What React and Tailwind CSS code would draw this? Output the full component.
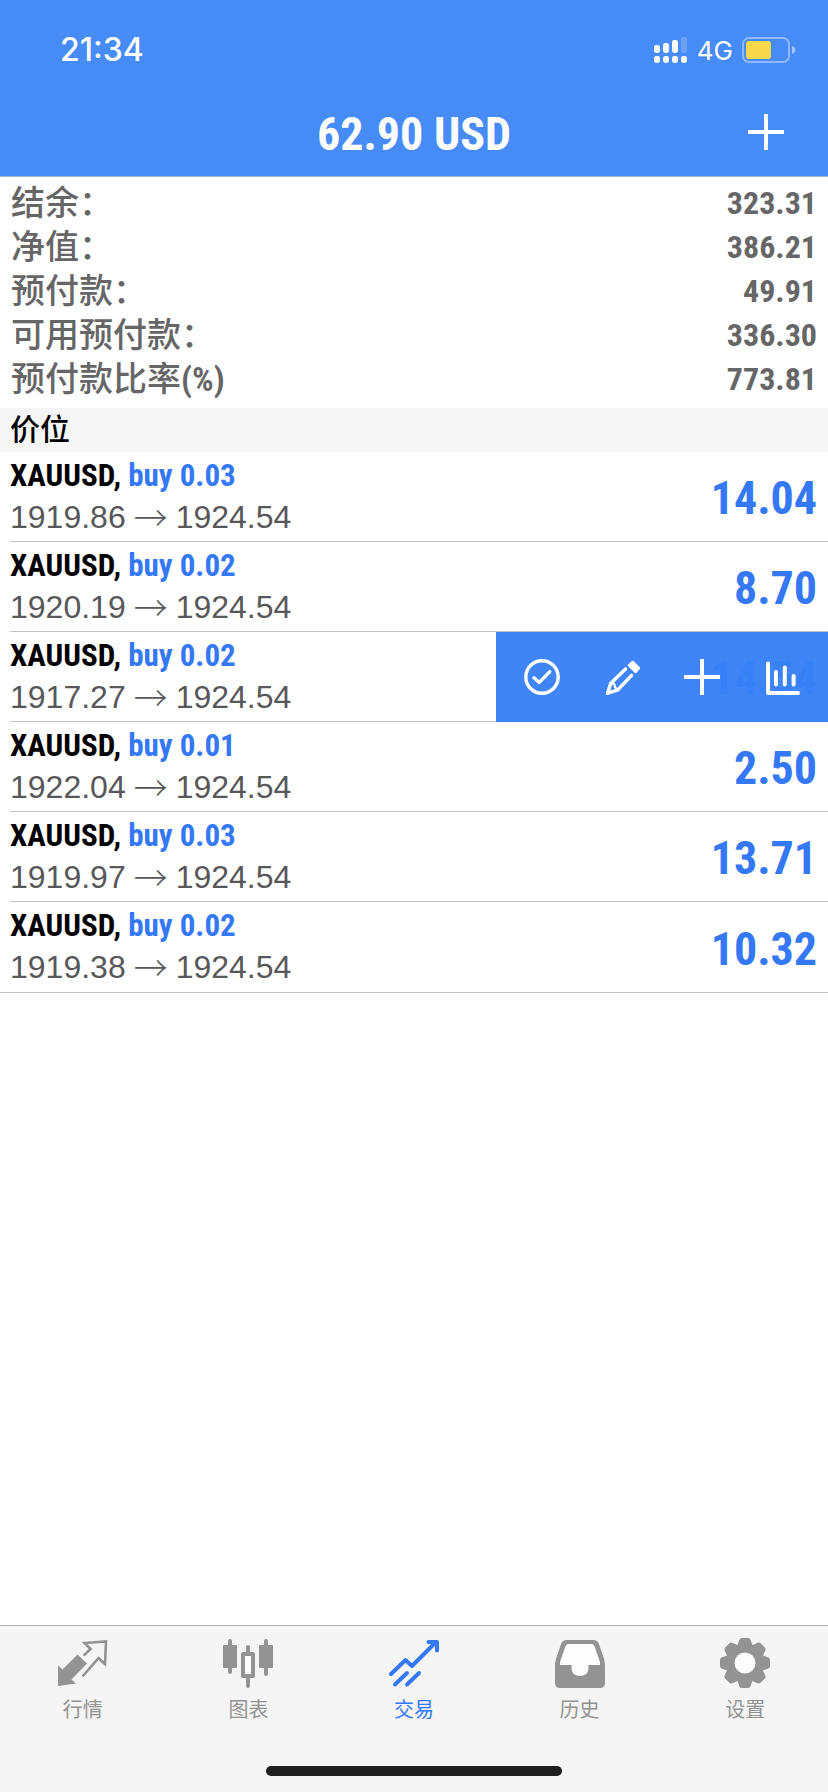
import React, { useState } from 'react';
import clsx from 'clsx';

const summary = [
  { label: '结余：', value: '323.31' },
  { label: '净值：', value: '386.21' },
  { label: '预付款：', value: '49.91' },
  { label: '可用预付款：', value: '336.30' },
  { label: '预付款比率', unit: '(%)', value: '773.81' },
];

const positions = [
  { id: 1, symbol: 'XAUUSD', side: 'buy', volume: '0.03', open: '1919.86', current: '1924.54', profit: '14.04' },
  { id: 2, symbol: 'XAUUSD', side: 'buy', volume: '0.02', open: '1920.19', current: '1924.54', profit: '8.70' },
  { id: 3, symbol: 'XAUUSD', side: 'buy', volume: '0.02', open: '1917.27', current: '1924.54', profit: '14.54' },
  { id: 4, symbol: 'XAUUSD', side: 'buy', volume: '0.01', open: '1922.04', current: '1924.54', profit: '2.50' },
  { id: 5, symbol: 'XAUUSD', side: 'buy', volume: '0.03', open: '1919.97', current: '1924.54', profit: '13.71' },
  { id: 6, symbol: 'XAUUSD', side: 'buy', volume: '0.02', open: '1919.38', current: '1924.54', profit: '10.32' },
];

const PlusIcon = () => (
  <svg width="36" height="36" viewBox="0 0 36 36" stroke="currentColor" strokeWidth="4" aria-hidden="true">
    <path d="M18 0v36M0 18h36" />
  </svg>
);

const CheckIcon = () => (
  <svg width="36" height="36" viewBox="0 0 36 36" fill="none" stroke="currentColor" strokeWidth="3.4" aria-hidden="true">
    <circle cx="18" cy="18" r="16.2" />
    <path d="M10 18.8l5.2 4.6 10.6-10.6" strokeLinecap="round" strokeLinejoin="round" />
  </svg>
);

const PencilIcon = () => (
  <svg width="36" height="36" viewBox="0 0 36 36" fill="none" stroke="currentColor" aria-hidden="true">
    <path d="M21.6 10L6.6 24.4 3.6 34.2 13.4 31.2 27.6 16.4" strokeWidth="3.4" strokeLinejoin="round" strokeLinecap="round" />
    <path d="M7 24.5l3.4.8.6 3 2.6 2.4" strokeWidth="2.2" strokeLinejoin="round" />
    <path d="M2.5 35.5l1.5-5.5 4 4z" fill="currentColor" strokeWidth="1" strokeLinejoin="round" />
    <path d="M28.6 3L34.8 9.2 31.6 12.8 25 6.4z" fill="currentColor" strokeWidth="2.6" strokeLinejoin="round" />
  </svg>
);

const BarsIcon = () => (
  <svg width="36" height="36" viewBox="0 0 36 36" fill="none" stroke="currentColor" strokeWidth="4" strokeLinecap="round" strokeLinejoin="round" aria-hidden="true">
    <path d="M4 4.5v29.5h30" />
    <path d="M12 13v12.5M20.8 8.5v17M29.6 17v8.5" />
  </svg>
);

const SignalIcon = () => (
  <svg width="34" height="28" viewBox="0 0 34 28" fill="currentColor" aria-hidden="true">
    <rect x="0" y="9" width="6" height="8" rx="2.4" />
    <rect x="9" y="7" width="6" height="10" rx="2.4" />
    <rect x="18" y="4" width="6" height="13" rx="2.4" />
    <rect x="27" y="1" width="6" height="16" rx="2" opacity=".2" />
    <rect x="0" y="20" width="6" height="7" rx="2.4" />
    <rect x="9" y="20" width="6" height="7" rx="2.4" />
    <rect x="18" y="20" width="6" height="7" rx="2.4" />
    <rect x="27" y="20" width="6" height="7" rx="2.4" />
  </svg>
);

const BatteryIcon = () => (
  <svg width="54" height="26" viewBox="0 0 54 26" aria-hidden="true">
    <rect x="1" y="1" width="46" height="24" rx="6" fill="none" stroke="#fff" strokeOpacity=".4" strokeWidth="2" />
    <rect x="4" y="4" width="25" height="18" rx="3" fill="#f7d84b" />
    <path d="M50 9c2.4.8 3.4 2.2 3.4 4s-1 3.2-3.4 4z" fill="#fff" fillOpacity=".5" />
  </svg>
);

const QuotesIcon = () => (
  <svg width="50" height="50" viewBox="0 0 50 50" aria-hidden="true">
    <path d="M0 27.5L4.5 31.5 19.5 16.5 29 25.5 13.5 41.5 18 45.5 0 48z" fill="currentColor" />
    <path d="M25.6 17.6l7-6.6-6-6L48 3.5 47 26l-6.5-5.8L24.5 38.5" fill="none" stroke="currentColor" strokeWidth="2.6" />
  </svg>
);

const ChartIcon = () => (
  <svg width="50" height="50" viewBox="0 0 50 50" fill="none" stroke="currentColor" strokeWidth="4" strokeLinecap="round" aria-hidden="true">
    <path d="M7 3v31M43 3v33M25 9v6M25 40v8" />
    <rect x="1" y="8" width="12" height="21" fill="currentColor" strokeWidth="2" strokeLinejoin="round" />
    <rect x="37" y="8" width="12" height="21" fill="currentColor" strokeWidth="2" strokeLinejoin="round" />
    <rect x="20" y="16" width="10" height="22" className="fill-[#fdfdfd]" strokeLinejoin="round" />
  </svg>
);

const TradeIcon = () => (
  <svg width="50" height="50" viewBox="0 0 50 50" fill="none" stroke="currentColor" strokeWidth="4" strokeLinecap="round" strokeLinejoin="round" aria-hidden="true">
    <path d="M2 36L16.5 22 23 28 47 4" />
    <path d="M39.5 4H48V12.5" />
    <path d="M6 46.5L18 35M18 46.5l12-11.5" />
  </svg>
);

const HistoryIcon = () => (
  <svg width="50" height="50" viewBox="0 0 50 50" aria-hidden="true">
    <path
      d="M12 2h26c3 0 5 1.5 6 4l5 15c.6 2 1 4 1 6v18c0 3-2 5-5 5H5c-3 0-5-2-5-5V27c0-2 .4-4 1-6L6 6c1-2.5 3-4 6-4z"
      fill="currentColor"
    />
    <path d="M14 6h22c2 0 3 .8 3.6 2.6L45 24v3H33.5v3c0 5-3.5 8-8.5 8s-8.5-3-8.5-8v-3H5v-3L10.4 8.6C11 6.8 12 6 14 6z" className="fill-[#fdfdfd]" />
  </svg>
);

const SettingsIcon = () => (
  <svg width="50" height="50" viewBox="0 0 50 50" aria-hidden="true">
    <g fill="currentColor">
      <circle cx="25" cy="25" r="19" />
      {[0, 45, 90, 135, 180, 225, 270, 315].map((angle) => (
        <path key={angle} d="M15.5 9C19.5 7 18 0 22 0h6C32 0 30.5 7 34.5 9z" transform={`rotate(${angle} 25 25)`} />
      ))}
    </g>
    <circle cx="25" cy="25" r="10.5" className="fill-[#fdfdfd]" />
  </svg>
);

const tabs = [
  { id: 'quotes', label: '行情', icon: QuotesIcon },
  { id: 'chart', label: '图表', icon: ChartIcon },
  { id: 'trade', label: '交易', icon: TradeIcon },
  { id: 'history', label: '历史', icon: HistoryIcon },
  { id: 'settings', label: '设置', icon: SettingsIcon },
];

const rowActions = [
  { label: '平仓', icon: CheckIcon },
  { label: '修改', icon: PencilIcon },
  { label: '新订单', icon: PlusIcon },
  { label: '图表', icon: BarsIcon },
];

const StatusBar = () => (
  <div className="flex h-[100px] items-center justify-between pl-[60px] pr-8 font-['Inter',sans-serif]">
    <span className="text-[32px] font-medium">21:34</span>
    <div className="flex items-center gap-[9px]">
      <SignalIcon />
      <span className="text-[26px]">4G</span>
      <BatteryIcon />
    </div>
  </div>
);

const PositionRow = ({ position, open }) => (
  <li className="relative pl-[10px] last:border-b last:border-[#c4c4c6]">
    <div className={clsx('flex h-[90px] items-center justify-between pr-[11px]', position.id < positions.length && 'border-b border-[#c4c4c6]')}>
      <div>
        <p className="text-[31px] leading-[40px] font-bold text-black">
          {position.symbol}, <span className="text-[#3478f6]">{position.side} {position.volume}</span>
        </p>
        <p className="flex items-center gap-2 font-['Liberation_Sans',sans-serif] text-[32px] leading-[42px] text-[#58585a]">
          <span>{position.open}</span>
          <span className="font-['Noto_Sans_CJK_SC',sans-serif] text-[34px] font-light">→</span>
          <span>{position.current}</span>
        </p>
      </div>
      <span className="pt-1 text-[46px] font-bold text-[#3478f6]">{position.profit}</span>
    </div>
    {/* Swipe actions cover the right part of the row */}
    {open && (
      <div className="absolute inset-y-0 right-0 flex w-[332px] items-center bg-[#3780f6]/96 px-[6px] text-white">
        {rowActions.map(({ label, icon: Icon }) => (
          <button key={label} type="button" aria-label={label} className="flex h-full flex-1 items-center justify-center">
            <Icon />
          </button>
        ))}
      </div>
    )}
  </li>
);

const App = () => {
  const [activeTab, setActiveTab] = useState('trade');
  const swipedId = 3;

  return (
    <div className="flex min-h-screen flex-col bg-white font-['Roboto_Condensed','Liberation_Sans','Noto_Sans_CJK_SC',sans-serif]">
      <header className="border-b border-[#a3b4d6] bg-[#468bf6] text-white">
        <StatusBar />
        <div className="grid h-[76px] grid-cols-3 items-center px-11 pb-2">
          <h1 className="col-start-2 text-center text-[46px] leading-[60px] font-bold whitespace-nowrap">62.90 USD</h1>
          <button type="button" aria-label="新订单" className="justify-self-end pb-1">
            <PlusIcon />
          </button>
        </div>
      </header>

      <main className="flex-1">
        <dl className="px-[11px] pt-1 pb-[7px] text-[#666666]">
          {summary.map((item) => (
            <div key={item.label} className="flex h-11 items-center justify-between">
              <dt className="text-[34px] leading-[44px] font-medium">
                {item.label}
                {item.unit && <span className="font-bold">{item.unit}</span>}
              </dt>
              <dd className="text-[32px] leading-[44px] font-bold">{item.value}</dd>
            </div>
          ))}
        </dl>

        <h2 className="bg-[#f6f6f6] px-[10px] text-[30px] leading-[44px] font-medium text-black">价位</h2>
        <ul>
          {positions.map((position) => (
            <PositionRow key={position.id} position={position} open={position.id === swipedId} />
          ))}
        </ul>
      </main>

      <footer className="border-t border-[#b2b2b2] bg-[#f5f5f5]">
        <nav className="grid h-[140px] grid-cols-5 font-['Noto_Sans_CJK_SC',sans-serif]">
          {tabs.map(({ id, label, icon: Icon }) => (
            <button
              key={id}
              type="button"
              onClick={() => setActiveTab(id)}
              className={clsx('flex flex-col items-center gap-[7px] pt-3 text-[20px] leading-[28px]', activeTab === id ? 'text-[#3478f6]' : 'text-[#939393]')}
            >
              <Icon />
              <span>{label}</span>
            </button>
          ))}
        </nav>
        <div className="mx-auto mb-4 h-[10px] w-[296px] rounded-full bg-[#1f1f1f]" />
      </footer>
    </div>
  );
};

export default App;
